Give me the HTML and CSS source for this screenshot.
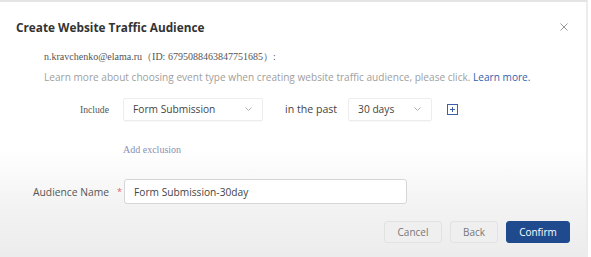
FILE: index.html
```html
<!DOCTYPE html>
<html lang="en">
  <head>
    <meta charset="UTF-8" />
    <link rel="stylesheet" href="styles.css">
  </head>
  <body>
    <div class="modal">
      <div class="modal-header">
        <span class="title">Create Website Traffic Audience</span>
        <svg class="close" width="8" height="8" viewBox="0 0 8 8"><path d="M0.5 0.5l7 7M7.5 0.5l-7 7" stroke="#999" stroke-width="1"/></svg>
      </div>
      <div class="account">n.kravchenko@elama.ru（ID: 6795088463847751685）:</div>
      <div class="hint">
        Learn more about choosing event type when creating website traffic audience, please click.
        <a class="link">Learn more.</a>
      </div>
      <div class="rule-row">
        <span class="rule-label">Include</span>
        <div class="select select-event">
          <span>Form Submission</span>
          <svg class="chevron" width="9" height="6" viewBox="0 0 9 6"><path d="M1.5 1.5l3 3 3-3" fill="none" stroke="#b0b0b0" stroke-width="1"/></svg>
        </div>
        <span class="past">in the past</span>
        <div class="select select-days">
          <span>30 days</span>
          <svg class="chevron" width="9" height="6" viewBox="0 0 9 6"><path d="M1.5 1.5l3 3 3-3" fill="none" stroke="#b0b0b0" stroke-width="1"/></svg>
        </div>
        <svg class="plus" width="11" height="11" viewBox="0 0 11 11">
          <rect x="0.5" y="0.5" width="10" height="10" fill="none" stroke="#3c5fa6" stroke-width="1"/>
          <path d="M5.5 3v5M3 5.5h5" stroke="#3c5fa6" stroke-width="1"/>
        </svg>
      </div>
      <div class="exclusion">Add exclusion</div>
      <div class="name-row">
        <span class="name-label">Audience Name</span>
        <span class="required">*</span>
        <div class="name-input">Form Submission-30day</div>
      </div>
      <div class="footer">
        <button class="btn btn-cancel">Cancel</button>
        <button class="btn btn-back">Back</button>
        <button class="btn btn-primary">Confirm</button>
      </div>
    </div>
  </body>
</html>
```

FILE: styles.css
```css
html,
body {
  margin: 0;
  height: 100%;
}
body {
  background: #fff;
  font-family: "Open Sans", "Noto Sans", sans-serif;
  color: #444;
}
.modal {
  height: 255px;
  width: 586px;
  border-top: 2px solid #e4e4e4;
  border-right: 2px solid #ececec;
  background: linear-gradient(to bottom, #fff 0%, #fff 58%, #f3f3f3 80%, #ececec 100%);
}
.modal-header {
  display: flex;
  justify-content: space-between;
  align-items: center;
  padding: 15px 18px 0 16px;
  height: 20px;
}
.title {
  font-size: 11.8px;
  font-weight: bold;
  color: #333;
}
.account {
  margin: 13px 0 0 44px;
  font-family: "Liberation Serif", serif;
  font-size: 10px;
  color: #555;
  height: 14px;
  line-height: 14px;
}
.hint {
  margin: 6px 0 0 44px;
  font-size: 10.1px;
  color: #a0a0a0;
  line-height: 14px;
}
.link {
  color: #2f5fae;
}
.rule-row {
  display: flex;
  align-items: center;
  margin-top: 13px;
  height: 24px;
}
.rule-label {
  width: 109px;
  text-align: right;
  font-family: "Liberation Serif", serif;
  font-size: 9.7px;
  color: #555;
  margin-right: 14px;
}
.select {
  display: flex;
  align-items: center;
  justify-content: space-between;
  box-sizing: border-box;
  height: 23px;
  border: 1px solid #ededed;
  border-radius: 2px;
  padding: 0 9px 0 9px;
  font-size: 10.2px;
  color: #444;
  box-shadow: 0 1px 1px rgba(0, 0, 0, 0.03);
}
.select-event {
  width: 140px;
}
.select-days {
  width: 84px;
}
.past {
  font-size: 10.6px;
  color: #444;
  margin: 0 11px 0 22px;
}
.plus {
  margin-left: 15px;
}
.exclusion {
  margin: 23px 0 0 123px;
  font-family: "Liberation Serif", serif;
  font-size: 10px;
  color: #8791b4;
}
.name-row {
  display: flex;
  align-items: center;
  margin-top: 24px;
  height: 25px;
}
.name-label {
  margin-left: 33px;
  font-size: 10.3px;
  color: #555;
}
.required {
  color: #e06060;
  font-size: 9px;
  margin: 0 0 0 8px;
  width: 7px;
}
.name-input {
  box-sizing: border-box;
  width: 283px;
  height: 25px;
  border: 1px solid #d6d6d6;
  border-radius: 3px;
  padding: 0 9px;
  display: flex;
  align-items: center;
  font-size: 10.2px;
  color: #444;
  background: #fff;
}
.footer {
  display: flex;
  justify-content: flex-end;
  gap: 8px;
  margin: 17px 16px 0 0;
}
.btn {
  height: 22px;
  border: 1px solid #e2e2e2;
  border-radius: 3px;
  background: #efefef;
  color: #777;
  font-family: "Open Sans", "Noto Sans", sans-serif;
  font-size: 10px;
  padding: 0;
}
.btn-cancel {
  width: 58px;
}
.btn-back {
  width: 48px;
}
.btn-primary {
  width: 64px;
  background: #1f4b8e;
  border-color: #1f4b8e;
  color: #fff;
}
```
